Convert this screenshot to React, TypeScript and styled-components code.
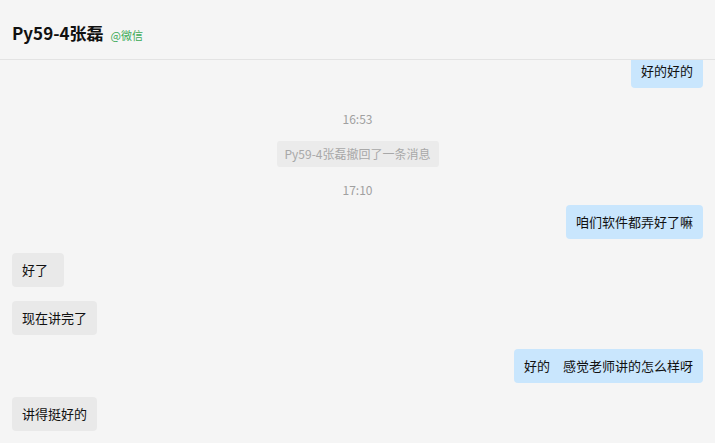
import styled, { createGlobalStyle } from "styled-components";

type Item =
  | { kind: "msg"; side: "me" | "them"; text: string; space: number }
  | { kind: "time"; text: string; space: number }
  | { kind: "notice"; text: string; space: number };

// chat data
const items: Item[] = [
  { kind: "msg", side: "me", text: "好的好的", space: 14 },
  { kind: "time", text: "16:53", space: 22 },
  { kind: "notice", text: "Py59-4张磊撤回了一条消息", space: 14 },
  { kind: "time", text: "17:10", space: 14 },
  { kind: "msg", side: "me", text: "咱们软件都弄好了嘛", space: 7 },
  { kind: "msg", side: "them", text: "好了  ", space: 14 },
  { kind: "msg", side: "them", text: "现在讲完了", space: 14 },
  { kind: "msg", side: "me", text: "好的　感觉老师讲的怎么样呀", space: 14 },
  { kind: "msg", side: "them", text: "讲得挺好的", space: 14 },
];

const GlobalStyle = createGlobalStyle`
  html, body {
    margin: 0;
    padding: 0;
    background: #f5f5f5;
  }
  body {
    font-family: "Noto Sans CJK SC", "Noto Sans", sans-serif;
  }
`;

// styles
const Page = styled.div`
  height: 100vh;
  display: flex;
  flex-direction: column;
  background: #f5f5f5;
`;

const Header = styled.header`
  height: 60px;
  flex-shrink: 0;
  display: flex;
  align-items: center;
  gap: 7px;
  padding: 7px 12px 0;
  box-sizing: border-box;
  border-bottom: 1px solid #e3e3e3;
`;

const Title = styled.h1`
  margin: 0;
  font-size: 17px;
  font-weight: bold;
  color: #111;
  line-height: 24px;
`;

const Source = styled.span`
  font-size: 11px;
  color: #3aaa55;
  margin-top: 4px;
`;

const List = styled.div`
  flex: 1;
  min-height: 0;
  overflow: hidden;
  display: flex;
  flex-direction: column;
  justify-content: flex-end;
  padding: 0 12px 12px;
`;

const Row = styled.div<{ $side: "me" | "them"; $space: number }>`
  flex-shrink: 0;
  display: flex;
  justify-content: ${(p) => (p.$side === "me" ? "flex-end" : "flex-start")};
  margin-top: ${(p) => p.$space}px;
`;

const Bubble = styled.div<{ $side: "me" | "them" }>`
  padding: 8px 10px;
  font-size: 13px;
  line-height: 18px;
  color: #111;
  white-space: pre;
  border-radius: 4px;
  background: ${(p) => (p.$side === "me" ? "#c9e6fd" : "#e9e9e9")};
`;

const Time = styled.div<{ $space: number }>`
  flex-shrink: 0;
  margin-top: ${(p) => p.$space}px;
  text-align: center;
  font-size: 12px;
  line-height: 17px;
  color: #a0a0a0;
`;

const NoticeRow = styled.div<{ $space: number }>`
  flex-shrink: 0;
  display: flex;
  justify-content: center;
  margin-top: ${(p) => p.$space}px;
`;

const Notice = styled.span`
  padding: 0 8px;
  font-size: 12px;
  line-height: 26px;
  color: #a8a8a8;
  background: #ebebeb;
  border-radius: 3px;
`;

export default function App() {
  return (
    <Page>
      <GlobalStyle />
      <Header>
        <Title>Py59-4张磊</Title>
        <Source>@微信</Source>
      </Header>
      <List>
        {items.map((it, i) => {
          if (it.kind === "time") {
            return (
              <Time key={i} $space={it.space}>
                {it.text}
              </Time>
            );
          }
          if (it.kind === "notice") {
            return (
              <NoticeRow key={i} $space={it.space}>
                <Notice>{it.text}</Notice>
              </NoticeRow>
            );
          }
          return (
            <Row key={i} $side={it.side} $space={it.space}>
              <Bubble $side={it.side}>{it.text}</Bubble>
            </Row>
          );
        })}
      </List>
    </Page>
  );
}
